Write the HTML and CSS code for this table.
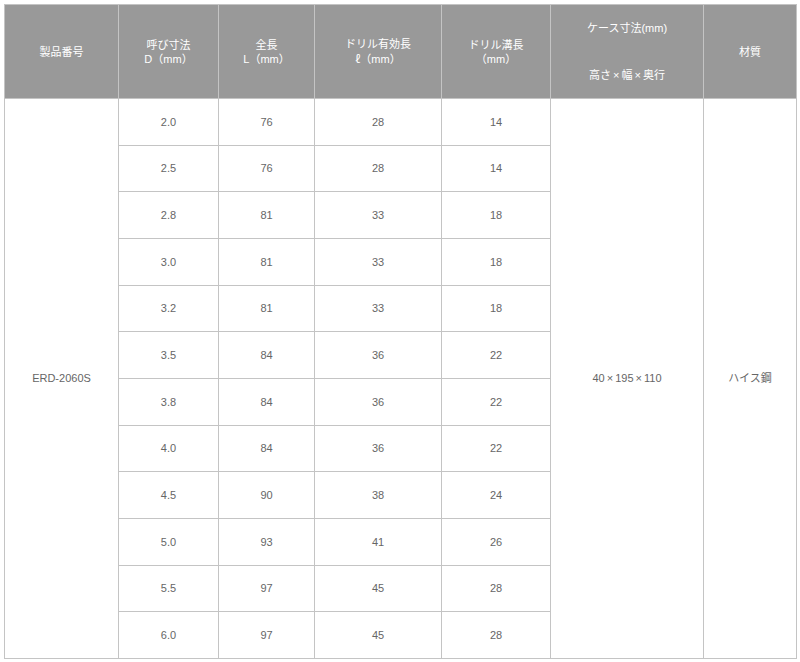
FILE: index.html
```html
<!DOCTYPE html>
<html lang="ja">
<head>
<meta charset="utf-8">
<link rel="stylesheet" href="styles.css">
</head>
<body>
<div class="wrap">
<table class="spec">
  <colgroup>
    <col class="c1"><col class="c2"><col class="c3"><col class="c4"><col class="c5"><col class="c6"><col class="c7">
  </colgroup>
  <thead>
    <tr>
      <th>製品番号</th>
      <th>呼び寸法<br>D（mm）</th>
      <th>全長<br>L（mm）</th>
      <th>ドリル有効長<br><span class="cjk">ℓ</span>（mm）</th>
      <th>ドリル溝長<br>（mm）</th>
      <th><div class="case-top">ケース寸法(mm)</div><div class="case-bottom">高さ<span class="times">×</span>幅<span class="times">×</span>奥行</div></th>
      <th>材質</th>
    </tr>
  </thead>
  <tbody>
    <tr><td rowspan="12">ERD-2060S</td><td>2.0</td><td>76</td><td>28</td><td>14</td><td rowspan="12">40<span class="times">×</span>195<span class="times">×</span>110</td><td rowspan="12">ハイス鋼</td></tr>
    <tr><td>2.5</td><td>76</td><td>28</td><td>14</td></tr>
    <tr><td>2.8</td><td>81</td><td>33</td><td>18</td></tr>
    <tr><td>3.0</td><td>81</td><td>33</td><td>18</td></tr>
    <tr><td>3.2</td><td>81</td><td>33</td><td>18</td></tr>
    <tr><td>3.5</td><td>84</td><td>36</td><td>22</td></tr>
    <tr><td>3.8</td><td>84</td><td>36</td><td>22</td></tr>
    <tr><td>4.0</td><td>84</td><td>36</td><td>22</td></tr>
    <tr><td>4.5</td><td>90</td><td>38</td><td>24</td></tr>
    <tr><td>5.0</td><td>93</td><td>41</td><td>26</td></tr>
    <tr><td>5.5</td><td>97</td><td>45</td><td>28</td></tr>
    <tr><td>6.0</td><td>97</td><td>45</td><td>28</td></tr>
  </tbody>
</table>
</div>
</body>
</html>
```
FILE: styles.css
```css
html, body {
  margin: 0;
  padding: 0;
  background: #ffffff;
}
.wrap {
  padding: 4px 0 0 4px;
}
.spec {
  border-collapse: collapse;
  table-layout: fixed;
  width: 792px;
  font-family: "Liberation Sans", "Noto Sans CJK JP", sans-serif;
  font-size: 11px;
  line-height: 14px;
  color: #666666;
}
.c1 { width: 114px; }
.c2 { width: 100px; }
.c3 { width: 96px; }
.c4 { width: 127px; }
.c5 { width: 109px; }
.c6 { width: 153px; }
.c7 { width: 93px; }
.spec th, .spec td {
  border: 1px solid #c4c4c4;
  text-align: center;
  vertical-align: middle;
  padding: 0;
}
.spec th {
  background: #999999;
  color: #ffffff;
  font-weight: normal;
  height: 93px;
}
.spec td {
  height: 45.67px;
}
.cjk {
  font-family: "Noto Sans CJK JP", sans-serif;
}
.times {
  margin: 0 2px;
}
.case-top {
  margin-bottom: 33px;
}
```
